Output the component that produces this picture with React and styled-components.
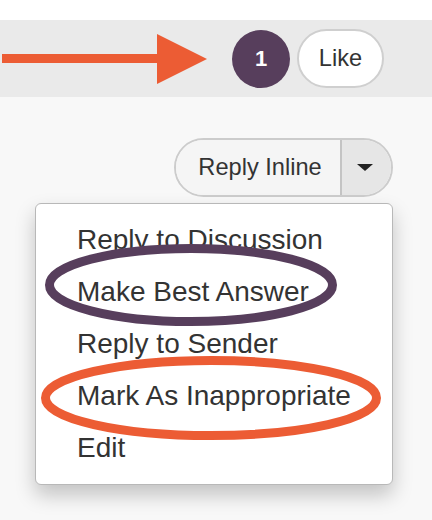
import React from "react";
import styled, { createGlobalStyle } from "styled-components";

const GlobalStyle = createGlobalStyle`
  html, body {
    margin: 0;
    background: #f8f8f8;
    font-family: "Liberation Sans", Arial, sans-serif;
  }
`;

const menuItems = [
  "Reply to Discussion",
  "Make Best Answer",
  "Reply to Sender",
  "Mark As Inappropriate",
  "Edit",
];

const App = () => {
  return (
    <Page>
      <GlobalStyle />
      <TopStrip />
      <LikeBar>
        <Arrow width="205" height="50" viewBox="0 0 205 50">
          <rect x="0" y="20" width="160" height="9" fill="#ec5c34" />
          <polygon points="155,0 205,25 155,50" fill="#ec5c34" />
        </Arrow>
        <CountBadge>1</CountBadge>
        <LikeButton>Like</LikeButton>
      </LikeBar>
      <Content>
        <SplitButton>
          <MainAction>Reply Inline</MainAction>
          <CaretToggle>
            <Caret />
          </CaretToggle>
        </SplitButton>
        <Menu>
          {menuItems.map((item) => (
            <MenuItem key={item}>{item}</MenuItem>
          ))}
          <Highlights width="358" height="282" viewBox="0 0 358 282">
            <ellipse cx="156" cy="82" rx="141.5" ry="36.5" fill="none" stroke="#573e5c" strokeWidth="9" />
            <ellipse cx="176" cy="195" rx="165.5" ry="37.5" fill="none" stroke="#ec5c34" strokeWidth="9" />
          </Highlights>
        </Menu>
      </Content>
    </Page>
  );
};

const Page = styled.main`
  width: 432px;
  height: 520px;
  overflow: hidden;
  background: #f8f8f8;
`;

const TopStrip = styled.div`
  height: 20px;
  background: #ffffff;
`;

const LikeBar = styled.section`
  height: 77px;
  background: #eaeaea;
  display: flex;
  align-items: center;
  padding-left: 2px;
`;

const Arrow = styled.svg`
  display: block;
  flex-shrink: 0;
`;

const CountBadge = styled.span`
  width: 58px;
  height: 58px;
  margin-left: 25px;
  border-radius: 50%;
  background: #573e5c;
  color: #ffffff;
  font-size: 22px;
  font-weight: bold;
  display: flex;
  align-items: center;
  justify-content: center;
`;

const LikeButton = styled.button`
  width: 87px;
  height: 59px;
  margin-left: 7px;
  border: 2px solid #cfcfcf;
  border-radius: 30px;
  background: #ffffff;
  color: #333333;
  font-family: inherit;
  font-size: 23.6px;
  padding: 0;
`;

const Content = styled.section`
  display: flex;
  flex-direction: column;
  align-items: flex-end;
  padding: 41px 39px 0 35px;
  gap: 6px;
`;

const SplitButton = styled.div`
  display: flex;
  height: 59px;
  border: 2px solid #cccccc;
  border-radius: 30px;
  overflow: hidden;
  box-sizing: border-box;
`;

const MainAction = styled.button`
  width: 166px;
  border: none;
  border-right: 2px solid #c4c4c4;
  background: #f5f5f5;
  color: #333333;
  font-family: inherit;
  font-size: 23.6px;
  padding: 0 0 0 4px;
`;

const CaretToggle = styled.button`
  width: 49px;
  border: none;
  background: #e6e6e6;
  display: flex;
  align-items: center;
  justify-content: center;
  padding: 0 4px 0 0;
`;

const Caret = styled.span`
  width: 0;
  height: 0;
  border-left: 8px solid transparent;
  border-right: 8px solid transparent;
  border-top: 7px solid #222222;
`;

const Menu = styled.ul`
  position: relative;
  list-style: none;
  margin: 0;
  width: 358px;
  box-sizing: border-box;
  padding: 10px 0;
  background: #ffffff;
  border: 1px solid #b8b8b8;
  border-radius: 6px;
  box-shadow: 0 10px 20px rgba(0, 0, 0, 0.22);
`;

const MenuItem = styled.li`
  padding-left: 41px;
  font-size: 28px;
  line-height: 52px;
  color: #333333;
  white-space: nowrap;
`;

const Highlights = styled.svg`
  position: absolute;
  left: -1px;
  top: -1px;
  overflow: visible;
  pointer-events: none;
`;

export default App;
